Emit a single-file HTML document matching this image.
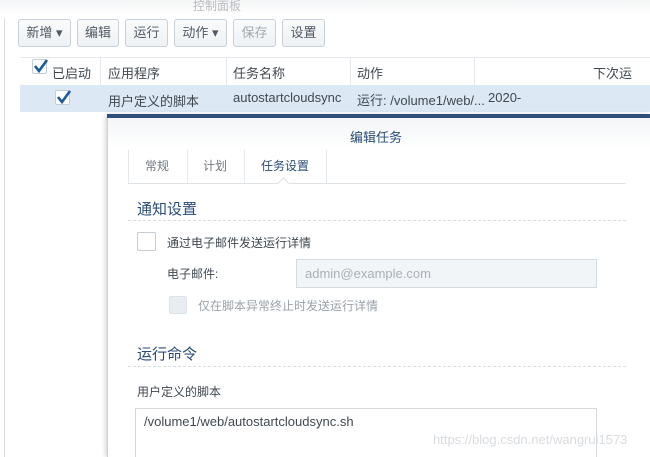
<!DOCTYPE html><html><head><meta charset="utf-8"><style>
*{margin:0;padding:0;box-sizing:border-box}
html,body{width:650px;height:457px;overflow:hidden}
body{background:#fff;font-family:"Liberation Sans","Noto Sans CJK SC",sans-serif;font-size:12px;color:#404850;position:relative}
.a{position:absolute;white-space:nowrap}
.btn{position:absolute;top:19px;height:28px;border:1px solid #c8d0d8;border-radius:3px;background:linear-gradient(#fafbfc,#eef1f4);line-height:26px;text-align:center;color:#505a64;font-size:13px}
.cb{position:absolute;border:1px solid #c4ccd4;background:#fff;border-radius:2px}
.dash{position:absolute;height:0;border-top:1px dashed #d8dde2}
</style></head><body>
<div class="a" style="left:0;top:0;width:650px;height:14px;background:linear-gradient(#f4f5f6,#fff)"></div>
<div class="a" style="left:193px;top:-3px;color:#b8bcc0;font-size:12px">控制面板</div>
<div class="a" style="left:4px;top:18px;width:1px;height:439px;background:#d8dce0"></div>
<div class="btn" style="left:18px;width:53px">新增 ▾</div>
<div class="btn" style="left:77px;width:42px">编辑</div>
<div class="btn" style="left:125px;width:43px">运行</div>
<div class="btn" style="left:174px;width:53px">动作 ▾</div>
<div class="btn" style="left:233px;width:43px;color:#a0a8b0">保存</div>
<div class="btn" style="left:282px;width:43px">设置</div>
<div class="a" style="left:20px;top:57px;width:630px;height:28px;border-top:1px solid #e4e8ec;background:#fff"></div>
<div class="a" style="left:100px;top:58px;width:1px;height:27px;background:#e4e8ec"></div>
<div class="a" style="left:226px;top:58px;width:1px;height:27px;background:#e4e8ec"></div>
<div class="a" style="left:350px;top:58px;width:1px;height:27px;background:#e4e8ec"></div>
<div class="a" style="left:474px;top:58px;width:1px;height:27px;background:#e4e8ec"></div>
<div class="cb" style="left:32px;top:59px;width:15px;height:15px"></div>
<svg class="a" style="left:33px;top:58px" width="16" height="16"><path d="M2 8 L6 13 L14 2" stroke="#1a5aa0" stroke-width="2.6" fill="none"/></svg>
<div class="a" style="left:52px;top:63px;font-size:13px">已启动</div>
<div class="a" style="left:108px;top:63px;font-size:13px">应用程序</div>
<div class="a" style="left:233px;top:63px;font-size:13px">任务名称</div>
<div class="a" style="left:357px;top:63px;font-size:13px">动作</div>
<div class="a" style="left:593px;top:63px;font-size:13px">下次运</div>
<div class="a" style="left:20px;top:85px;width:630px;height:27px;background:#dce8f4"></div>
<div class="cb" style="left:55px;top:90px;width:15px;height:15px"></div>
<svg class="a" style="left:56px;top:89px" width="16" height="16"><path d="M2 8 L6 13 L14 2" stroke="#1a5aa0" stroke-width="2.6" fill="none"/></svg>
<div class="a" style="left:108px;top:91px;font-size:13px">用户定义的脚本</div>
<div class="a" style="left:233px;top:90px;font-size:13px">autostartcloudsync</div>
<div class="a" style="left:357px;top:90px;font-size:13px">运行: /volume1/web/...</div>
<div class="a" style="left:488px;top:90px;font-size:13px">2020-</div>
<div class="a" style="left:107px;top:114px;width:543px;height:343px;background:#fff;border-left:1px solid #ccd2d8;box-shadow:-2px 0 4px rgba(0,0,0,.15)"></div>
<div class="a" style="left:107px;top:114px;width:543px;height:4px;background:#2e4f7c"></div>
<div class="a" style="left:108px;top:118px;width:542px;height:30px;background:linear-gradient(#f3f5f7,#fff)"></div>
<div class="a" style="left:350px;top:127px;color:#2a4c78;font-size:13px">编辑任务</div>
<div class="a" style="left:128px;top:150px;width:1px;height:33px;background:#e4e8ec"></div>
<div class="a" style="left:187px;top:150px;width:1px;height:33px;background:#e4e8ec"></div>
<div class="a" style="left:244px;top:150px;width:1px;height:33px;background:#e4e8ec"></div>
<div class="a" style="left:326px;top:150px;width:1px;height:33px;background:#e4e8ec"></div>
<div class="a" style="left:145px;top:157px;color:#707880">常规</div>
<div class="a" style="left:203px;top:157px;color:#707880">计划</div>
<div class="a" style="left:261px;top:157px;color:#2a4c78">任务设置</div>
<div class="a" style="left:128px;top:183px;width:498px;height:1px;background:#dde2e6"></div>
<div class="a" style="left:279px;top:179px;width:9px;height:9px;background:#fff;border-left:1px solid #dde2e6;border-top:1px solid #dde2e6;transform:rotate(45deg)"></div>
<div class="a" style="left:137px;top:198px;font-size:15px;color:#2a4c78">通知设置</div>
<div class="dash" style="left:128px;top:220px;width:498px"></div>
<div class="cb" style="left:137px;top:232px;width:19px;height:19px"></div>
<div class="a" style="left:167px;top:234px">通过电子邮件发送运行详情</div>
<div class="a" style="left:167px;top:265px">电子邮件:</div>
<div class="a" style="left:296px;top:259px;width:301px;height:29px;border:1px solid #d4dae0;background:#f2f5f8;color:#a8b0b8;font-size:13px;line-height:27px;padding-left:8px">admin@example.com</div>
<div class="a" style="left:169px;top:296px;width:18px;height:18px;background:#e8edf2;border:1px solid #dde3e8;border-radius:2px"></div>
<div class="a" style="left:198px;top:297px;color:#9aa2aa">仅在脚本异常终止时发送运行详情</div>
<div class="a" style="left:137px;top:343px;font-size:15px;color:#2a4c78">运行命令</div>
<div class="dash" style="left:128px;top:366px;width:498px"></div>
<div class="a" style="left:137px;top:383px">用户定义的脚本</div>
<div class="a" style="left:135px;top:408px;width:462px;height:49px;border:1px solid #d4dae0;border-bottom:none;padding:5px 8px;font-size:13px">/volume1/web/autostartcloudsync.sh</div>
<div class="a" style="left:433px;top:432px;color:#d8dce0;font-size:13px">https://blog.csdn.net/wangrui1573</div>
</body></html>
